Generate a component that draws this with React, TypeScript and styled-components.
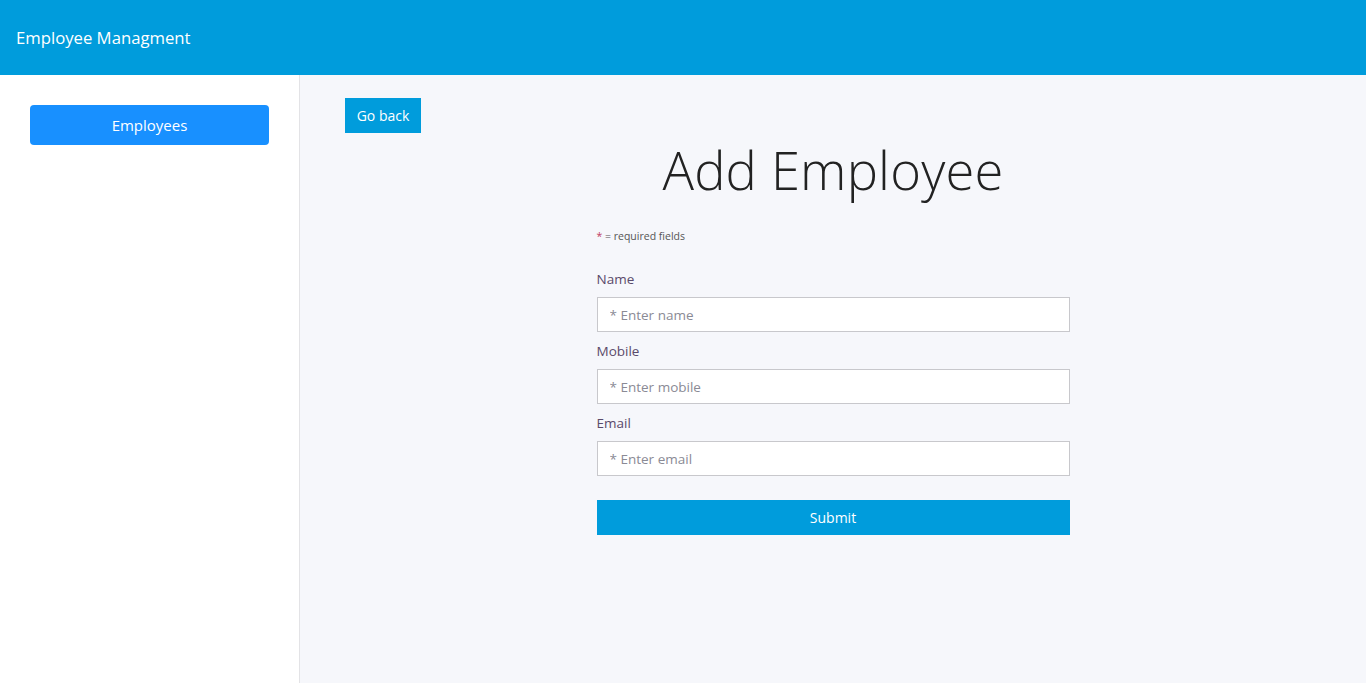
import React from "react";
import styled, { createGlobalStyle } from "styled-components";

const Global = createGlobalStyle`
  html, body { margin: 0; padding: 0; height: 100%; }
  body { font-family: "Open Sans", "Noto Sans", "Liberation Sans", sans-serif; background: #f6f7fb; }
  #root { height: 100%; }
  * { box-sizing: border-box; }
`;

const Page = styled.div`
  display: flex;
  flex-direction: column;
  height: 683px;
`;

const Header = styled.header`
  height: 75px;
  flex: none;
  background: #009cdc;
  display: flex;
  align-items: center;
  padding-left: 16px;
  color: #fff;
  font-size: 16.7px;
`;

const Body = styled.div`
  flex: 1;
  display: flex;
  min-height: 0;
`;

const Sidebar = styled.aside`
  width: 300px;
  flex: none;
  background: #fff;
  border-right: 1px solid #e3e3e6;
  padding: 30px 30px 0 30px;
`;

const NavButton = styled.button`
  width: 239px;
  height: 40px;
  border: none;
  border-radius: 4px;
  background: #1890ff;
  color: #fff;
  font-family: inherit;
  font-size: 15px;
  cursor: pointer;
`;

const Main = styled.main`
  flex: 1;
  padding: 23px 45px 0 45px;
  display: flex;
  flex-direction: column;
`;

const BackButton = styled.button`
  align-self: flex-start;
  height: 35px;
  width: 76px;
  padding: 0;
  border: none;
  background: #009cdc;
  color: #fff;
  font-family: inherit;
  font-size: 14px;
`;

const Title = styled.h1`
  margin: 2px 0 0 0;
  text-align: center;
  font-weight: 300;
  font-size: 52.5px;
  line-height: 70px;
  color: #222;
  letter-spacing: 0.2px;
`;

const Form = styled.form`
  width: 473px;
  margin: 24px auto 0 auto;
  display: flex;
  flex-direction: column;
`;

const Note = styled.div`
  font-size: 10.5px;
  color: #555;
  margin-bottom: 27px;
  span { color: #c04060; }
`;

const Label = styled.label`
  font-size: 13.5px;
  color: #5a4a6a;
  line-height: 18px;
  margin-bottom: 9px;
`;

const Input = styled.input`
  height: 35px;
  border: 1px solid #c8c8cc;
  background: #fff;
  padding: 0 12px;
  font-family: inherit;
  font-size: 13.5px;
  margin-bottom: 10px;
  &::placeholder { color: #8a8a95; }
`;

const Submit = styled.button`
  margin-top: 14px;
  height: 35px;
  border: none;
  background: #009cdc;
  color: #fff;
  font-family: inherit;
  font-size: 14px;
`;

export default function App() {
  return (
    <>
      <Global />
      <Page>
        <Header>Employee Managment</Header>
        <Body>
          <Sidebar>
            <NavButton>Employees</NavButton>
          </Sidebar>
          <Main>
            <BackButton>Go back</BackButton>
            <Title>Add Employee</Title>
            <Form onSubmit={(e) => e.preventDefault()}>
              <Note><span>*</span> = required fields</Note>
              <Label>Name</Label>
              <Input placeholder="* Enter name" />
              <Label>Mobile</Label>
              <Input placeholder="* Enter mobile" />
              <Label>Email</Label>
              <Input placeholder="* Enter email" />
              <Submit type="submit">Submit</Submit>
            </Form>
          </Main>
        </Body>
      </Page>
    </>
  );
}
